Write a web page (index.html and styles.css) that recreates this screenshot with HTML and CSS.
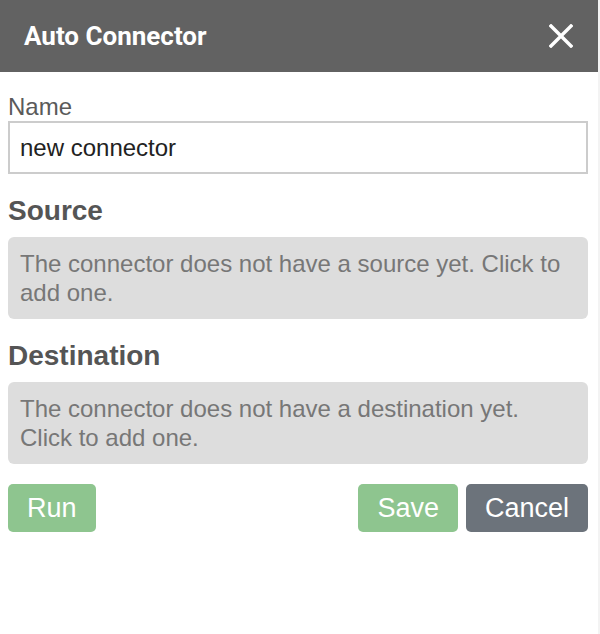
FILE: index.html
```html
<!DOCTYPE html>
<html lang="en">
<head>
<meta charset="utf-8">
<title>Auto Connector</title>
<link rel="stylesheet" href="styles.css">
</head>
<body>
<div class="dialog">
  <header class="dialog-header">
    <h1 class="dialog-title">Auto Connector</h1>
    <button class="close-btn" aria-label="Close">
      <svg width="24" height="24" viewBox="0 0 24 24"><path d="M2 2 L22 22 M22 2 L2 22" stroke="#fff" stroke-width="3.4" stroke-linecap="square" fill="none"/></svg>
    </button>
  </header>
  <div class="dialog-body">
    <label class="field-label" for="name">Name</label>
    <input class="text-input" id="name" type="text" value="new connector">
    <h2 class="section-title">Source</h2>
    <div class="placeholder-box">The connector does not have a source yet. Click to add one.</div>
    <h2 class="section-title">Destination</h2>
    <div class="placeholder-box">The connector does not have a destination yet. Click to add one.</div>
    <div class="actions">
      <button class="btn btn-green">Run</button>
      <div class="actions-right">
        <button class="btn btn-green">Save</button>
        <button class="btn btn-gray">Cancel</button>
      </div>
    </div>
  </div>
</div>
</body>
</html>
```
FILE: styles.css
```css
html, body {
  margin: 0;
  padding: 0;
  background: #ffffff;
}
body {
  font-family: "Liberation Sans", Arial, sans-serif;
}
.dialog {
  width: 598px;
  height: 634px;
  border-right: 2px solid #f3f3f3;
  background: #fff;
}
.dialog-header {
  height: 72px;
  background: #626262;
  display: flex;
  align-items: center;
  justify-content: space-between;
  padding: 0 25px 0 24px;
  box-sizing: border-box;
}
.dialog-title {
  margin: 0;
  font-family: Roboto, "Liberation Sans", sans-serif;
  font-weight: 700;
  font-size: 26px;
  color: #fff;
}
.close-btn {
  background: none;
  border: 0;
  padding: 0;
  width: 24px;
  height: 24px;
  display: flex;
  cursor: pointer;
}
.dialog-body {
  padding: 21px 10px 0 8px;
  display: flex;
  flex-direction: column;
}
.field-label {
  font-size: 24px;
  line-height: 28px;
  color: #5a5a5a;
}
.text-input {
  box-sizing: border-box;
  height: 53px;
  width: 100%;
  border: 2px solid #cccccc;
  padding: 0 10px;
  font-family: "Liberation Sans", Arial, sans-serif;
  font-size: 24px;
  color: #222;
  outline: none;
  margin: 0;
}
.section-title {
  margin: 20px 0 9px;
  font-size: 28px;
  line-height: 34px;
  font-weight: 700;
  color: #555555;
}
.placeholder-box {
  background: #dddddd;
  border-radius: 6px;
  padding: 12px 12px 12px;
  font-size: 24px;
  line-height: 29px;
  color: #777777;
}
.actions {
  margin-top: 20px;
  display: flex;
  justify-content: space-between;
}
.actions-right {
  display: flex;
  gap: 8px;
}
.btn {
  height: 48px;
  border: 0;
  border-radius: 5px;
  padding: 0 19px;
  font-family: "Liberation Sans", Arial, sans-serif;
  font-size: 27px;
  color: #fff;
  cursor: pointer;
}
.btn-green {
  background: #8ec58f;
}
.btn-gray {
  background: #6c737b;
}
```
